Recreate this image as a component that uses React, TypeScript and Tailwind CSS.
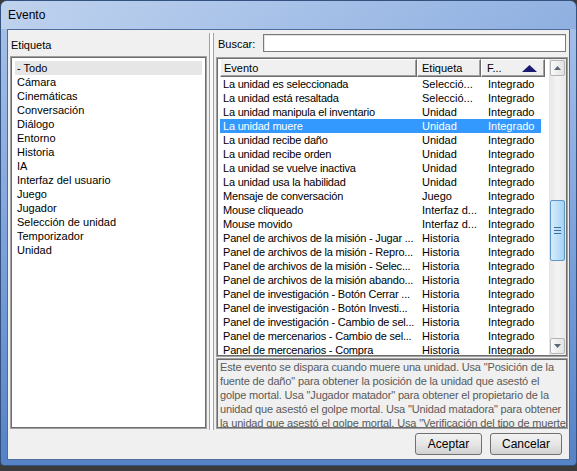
import React from "react";

const rows: [string, string, string][] = [
  ["La unidad es seleccionada", "Selecció...", "Integrado"],
  ["La unidad está resaltada", "Selecció...", "Integrado"],
  ["La unidad manipula el inventario", "Unidad", "Integrado"],
  ["La unidad muere", "Unidad", "Integrado"],
  ["La unidad recibe daño", "Unidad", "Integrado"],
  ["La unidad recibe orden", "Unidad", "Integrado"],
  ["La unidad se vuelve inactiva", "Unidad", "Integrado"],
  ["La unidad usa la habilidad", "Unidad", "Integrado"],
  ["Mensaje de conversación", "Juego", "Integrado"],
  ["Mouse cliqueado", "Interfaz d...", "Integrado"],
  ["Mouse movido", "Interfaz d...", "Integrado"],
  ["Panel de archivos de la misión - Jugar ...", "Historia", "Integrado"],
  ["Panel de archivos de la misión - Repro...", "Historia", "Integrado"],
  ["Panel de archivos de la misión - Selec...", "Historia", "Integrado"],
  ["Panel de archivos de la misión abando...", "Historia", "Integrado"],
  ["Panel de investigación - Botón Cerrar ...", "Historia", "Integrado"],
  ["Panel de investigación - Botón Investi...", "Historia", "Integrado"],
  ["Panel de investigación - Cambio de sel...", "Historia", "Integrado"],
  ["Panel de mercenarios - Cambio de sel...", "Historia", "Integrado"],
  ["Panel de mercenarios - Compra", "Historia", "Integrado"],
];

const tags = [
  "- Todo",
  "Cámara",
  "Cinemáticas",
  "Conversación",
  "Diálogo",
  "Entorno",
  "Historia",
  "IA",
  "Interfaz del usuario",
  "Juego",
  "Jugador",
  "Selección de unidad",
  "Temporizador",
  "Unidad",
];

const descLines = [
  'Este evento se dispara cuando muere una unidad. Usa "Posición de la',
  'fuente de daño" para obtener la posición de la unidad que asestó el',
  'golpe mortal. Usa "Jugador matador" para obtener el propietario de la',
  'unidad que asestó el golpe mortal. Usa "Unidad matadora" para obtener',
  'la unidad que asestó el golpe mortal. Usa "Verificación del tipo de muerte',
  'dispersada" para obtener el tipo de muerte del "Jugador dispersado".',
];

function ScrollButton({ up }: { up: boolean }) {
  return (
    <div className="mx-[1px] h-[16px] rounded-[2px] border border-[#b5b5b5] bg-gradient-to-r from-[#fafafa] to-[#e2e2e2] flex items-center justify-center">
      <svg width="7" height="4" viewBox="0 0 7 4">
        {up ? (
          <path d="M0 4 L3.5 0 L7 4 Z" fill="#5d6675" />
        ) : (
          <path d="M0 0 L3.5 4 L7 0 Z" fill="#5d6675" />
        )}
      </svg>
    </div>
  );
}

export default function App() {
  return (
    <div className="w-[577px] h-[471px] bg-[#3b3b3b] overflow-hidden font-['Liberation_Sans',Arial,sans-serif] text-[11px] text-black">
      <div className="h-[466px] rounded-t-[7px] rounded-b-[4px] border border-[#34527f] bg-gradient-to-b from-[#a9c3e9] via-[#7ea3dc] to-[#5682c6] flex flex-col">
        <div className="h-[28px] rounded-t-[6px] bg-gradient-to-r from-[#c4d6ef]/80 via-[#a6c0e8]/30 to-[#6f98d6]/40 flex items-center pl-[7px] text-[12px] text-black">
          Evento
        </div>
        <div className="flex-1 min-h-0 mx-[6px] mb-[5px] border border-[#4d6c9c] bg-[#f0f0f0] flex flex-col">
          <div className="h-[400px] flex">
            {/* left panel */}
            <div className="w-[200px] shrink-0 pl-[2px] pr-[1px] pb-[1px] flex flex-col">
              <div className="h-[26px] pt-[8px] pl-[1px] leading-[14px]">Etiqueta</div>
              <div className="flex-1 border border-[#a0a0a0]">
                <div className="h-full border border-[#6d6d6d] bg-white p-[3px]">
                  {tags.map((t, i) => (
                    <div
                      key={t}
                      className={
                        i === 0
                          ? "h-[14px] leading-[14px] pl-[2px] bg-[#e6e6e6]"
                          : "h-[14px] leading-[14px] pl-[2px]"
                      }
                    >
                      {t}
                    </div>
                  ))}
                </div>
              </div>
            </div>
            {/* splitter */}
            <div className="w-[6px] shrink-0 pt-[3px]">
              <div className="ml-[1px] w-[5px] h-full border-x border-[#a0a0a0] bg-[#fbfbfb]" />
            </div>
            {/* right panel */}
            <div className="flex-1 min-w-0 pl-[2px] pr-[1px] pb-[1px] flex flex-col">
              <div className="h-[27px] pt-[4px] flex items-start">
                <div className="pl-[2px] pt-[3px] leading-[14px]">Buscar:</div>
                <div className="ml-auto mr-[2px] w-[303px] h-[18px] border border-[#7a7a7a] bg-white shadow-[inset_1px_1px_0_#e3e3e3]" />
              </div>
              {/* list view */}
              <div className="h-[300px] border border-[#a0a0a0]">
                <div className="h-full border border-[#6d6d6d] bg-white flex">
                  <div className="flex-1 min-w-0 pl-[2px] overflow-hidden">
                    <div className="h-[18px] flex">
                      <div className="w-[197px] border-t border-l border-white border-b border-r border-b-[#6d6d6d] border-r-[#6d6d6d] bg-[#f0f0f0] pl-[3px] leading-[16px] shadow-[inset_-1px_-1px_0_#a0a0a0]">
                        Evento
                      </div>
                      <div className="w-[64px] border-t border-l border-white border-b border-r border-b-[#6d6d6d] border-r-[#6d6d6d] bg-[#f0f0f0] pl-[4px] leading-[16px] shadow-[inset_-1px_-1px_0_#a0a0a0]">
                        Etiqueta
                      </div>
                      <div className="w-[64px] border-t border-l border-white border-b border-r border-b-[#6d6d6d] border-r-[#6d6d6d] bg-[#f0f0f0] pl-[5px] leading-[16px] shadow-[inset_-1px_-1px_0_#a0a0a0] flex items-center">
                        <span>F...</span>
                        <svg className="ml-[20px]" width="15" height="7" viewBox="0 0 15 7">
                          <path d="M0 7 L7.5 0 L15 7 Z" fill="#1c1a72" />
                        </svg>
                      </div>
                    </div>
                    {rows.map((r, i) => (
                      <div
                        key={i}
                        className={
                          i === 3
                            ? "w-[321px] h-[14px] leading-[14px] flex bg-[#3399ff] text-white"
                            : "w-[321px] h-[14px] leading-[14px] flex"
                        }
                      >
                        <div className="w-[197px] pl-[3px] whitespace-nowrap overflow-hidden tracking-[-0.2px]">{r[0]}</div>
                        <div className="w-[64px] pl-[5px] whitespace-nowrap overflow-hidden">{r[1]}</div>
                        <div className="w-[60px] pl-[7px] whitespace-nowrap overflow-hidden">{r[2]}</div>
                      </div>
                    ))}
                  </div>
                  {/* scrollbar */}
                  <div className="w-[17px] shrink-0 bg-gradient-to-r from-[#e6e6e6] via-[#f4f4f4] to-[#e9e9e9] flex flex-col pt-[1px] pb-[1px]">
                    <ScrollButton up />
                    <div className="h-[124px]" />
                    <div className="mx-[1px] h-[61px] rounded-[2px] border border-[#5f96c6] bg-gradient-to-r from-[#d4ecfb] via-[#bfe1f8] to-[#a3d1f3] flex flex-col items-center justify-center gap-[2px]">
                      <div className="w-[7px] h-[1px] bg-[#3b6e9c]" />
                      <div className="w-[7px] h-[1px] bg-[#3b6e9c]" />
                      <div className="w-[7px] h-[1px] bg-[#3b6e9c]" />
                    </div>
                    <div className="flex-1" />
                    <ScrollButton up={false} />
                  </div>
                </div>
              </div>
              {/* description */}
              <div className="mt-[1px] h-[71px] border border-[#a0a0a0] overflow-hidden">
                <div className="h-full border border-[#6d6d6d] bg-[#f0f0f0] px-[2px] leading-[14px] text-[#5a5a5a] overflow-hidden tracking-[-0.15px]">
                  {descLines.map((l, i) => (
                    <div key={i} className="whitespace-nowrap">
                      {l}
                    </div>
                  ))}
                </div>
              </div>
            </div>
          </div>
          {/* buttons */}
          <div className="flex-1 flex items-start justify-end gap-[8px] pt-[3px] pr-[7px]">
            <button className="w-[67px] h-[22px] rounded-[3px] border border-[#707070] bg-gradient-to-b from-[#f2f2f2] via-[#e6e6e6] to-[#d2d2d2] text-[12px] leading-[20px]">
              Aceptar
            </button>
            <button className="w-[72px] h-[22px] rounded-[3px] border border-[#707070] bg-gradient-to-b from-[#f2f2f2] via-[#e6e6e6] to-[#d2d2d2] text-[12px] leading-[20px]">
              Cancelar
            </button>
          </div>
        </div>
      </div>
    </div>
  );
}
